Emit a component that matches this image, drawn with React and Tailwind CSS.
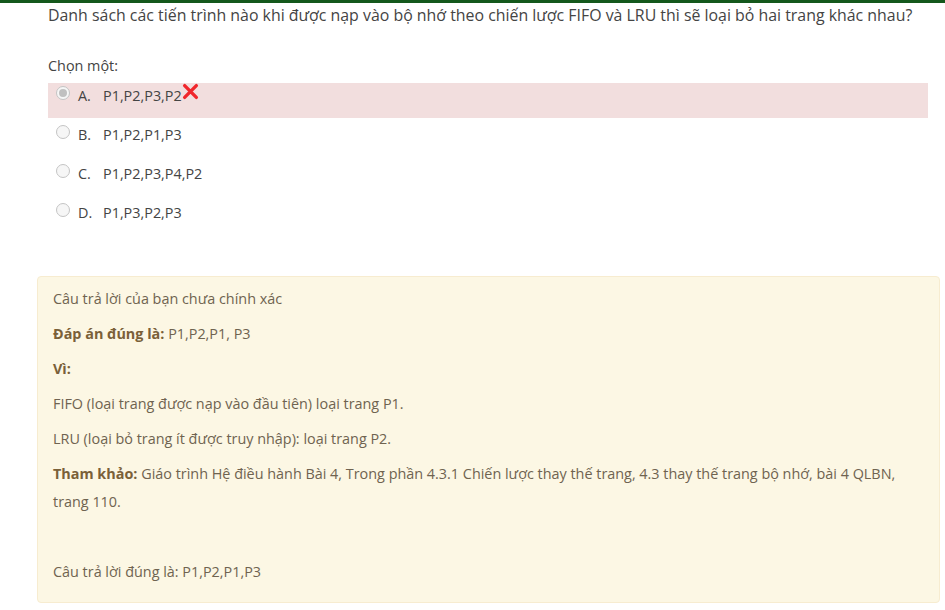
import React from "react";

function Radio({ checked }) {
  return (
    <span className="flex h-[14px] w-[14px] shrink-0 items-center justify-center rounded-full border border-[#c4c4c4] bg-[#f6f6f6]">
      {checked && <span className="h-[8px] w-[8px] rounded-full bg-[#c0c0c0]" />}
    </span>
  );
}

function Cross() {
  return (
    <svg width="17" height="17" viewBox="0 0 16 16" className="-mt-[3px]">
      <path d="M2.5 2.5 L13.5 13.5 M13.5 2.5 L2.5 13.5" stroke="#f0262c" strokeWidth="3.2" strokeLinecap="round" />
    </svg>
  );
}

const options = [
  { l: "A.", t: "P1,P2,P3,P2", wrong: true },
  { l: "B.", t: "P1,P2,P1,P3" },
  { l: "C.", t: "P1,P2,P3,P4,P2" },
  { l: "D.", t: "P1,P3,P2,P3" },
];

export default function App() {
  return (
    <div className="min-h-[610px] w-[945px] bg-white" style={{ fontFamily: '"Open Sans", sans-serif' }}>
      <div className="h-[3px] bg-[#14581c]" />
      <div className="pl-[48px] text-[15.9px] leading-[24px] text-[#444]">
        Danh sách các tiến trình nào khi được nạp vào bộ nhớ theo chiến lược FIFO và LRU thì sẽ loại bỏ hai trang khác nhau?
      </div>
      <div className="mt-[29px] pl-[48px] text-[14.4px] leading-[20px] text-[#444]">Chọn một:</div>
      <div className="ml-[48px] mt-[7px] flex w-[880px] flex-col gap-[4px]">
        {options.map((o) => (
          <div
            key={o.l}
            className={`flex h-[35px] items-start pt-[3px] text-[14.4px] leading-[20px] text-[#444] ${o.wrong ? "bg-[#f2dede]" : ""}`}
          >
            <span className="ml-[8px] mt-[0px] flex"><Radio checked={!!o.wrong} /></span>
            <span className="ml-[8px] w-[25px]">{o.l}</span>
            <span>{o.t}</span>
            {o.wrong && <Cross />}
          </div>
        ))}
      </div>
      <div className="ml-[37px] mt-[41px] w-[903px] rounded-[4px] border border-[#f7ecd0] bg-[#fcf7e4] pb-[16px] pl-[15px] pr-[20px] pt-[8px] text-[14.4px] leading-[28px] text-[#6f6350]">
        <p className="mb-[7px]">Câu trả lời của bạn chưa chính xác</p>
        <p className="mb-[7px]"><b className="text-[#7a6038]">Đáp án đúng là:</b> P1,P2,P1, P3</p>
        <p className="mb-[7px]"><b className="text-[#7a6038]">Vì:</b></p>
        <p className="mb-[7px]">FIFO (loại trang được nạp vào đầu tiên) loại trang P1.</p>
        <p className="mb-[7px]">LRU (loại bỏ trang ít được truy nhập): loại trang P2.</p>
        <p className="mb-[7px]"><b className="text-[#7a6038]">Tham khảo:</b> Giáo trình Hệ điều hành Bài 4, Trong phần 4.3.1 Chiến lược thay thế trang, 4.3 thay thế trang bộ nhớ, bài 4 QLBN, trang 110.</p>
        <p className="mb-[7px] h-[28px]"></p>
        <p>Câu trả lời đúng là: P1,P2,P1,P3</p>
      </div>
    </div>
  );
}
